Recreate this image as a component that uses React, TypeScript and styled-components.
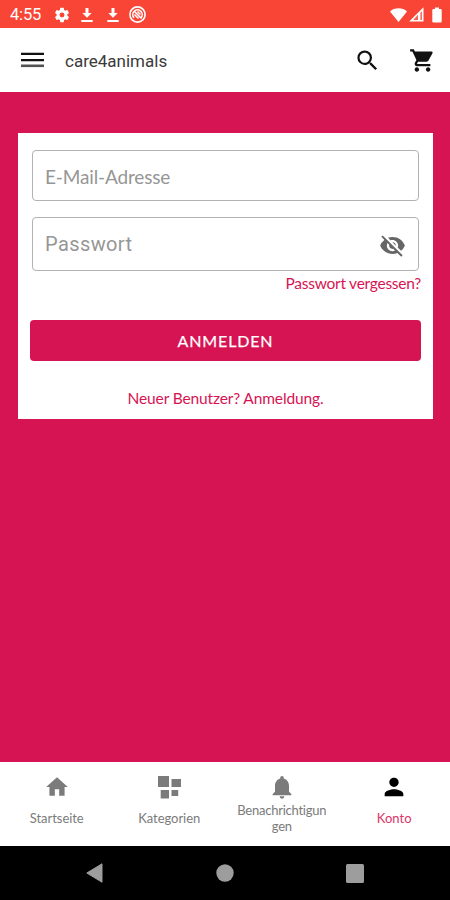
import React from 'react';
import styled, { createGlobalStyle } from 'styled-components';

const CRIMSON = '#d61453';
const GREY = '#7b7b7b';

const GlobalStyle = createGlobalStyle`
  * { box-sizing: border-box; }
  body { margin: 0; font-family: Lato, "Open Sans", sans-serif; font-variant-ligatures: none; }
`;

const Screen = styled.div`
  display: flex;
  flex-direction: column;
  width: 450px;
  height: 900px;
  overflow: hidden;
  background: ${CRIMSON};
`;

const StatusBar = styled.header`
  display: flex;
  align-items: center;
  justify-content: space-between;
  height: 28px;
  padding: 1px 8px 0 10px;
  background: #f84535;
  color: #fff;
`;

const StatusGroup = styled.div`
  display: flex;
  align-items: center;
`;

const Clock = styled.span`
  width: 43px;
  padding-top: 1px;
  font: 400 16.5px/20px Roboto, sans-serif;
  letter-spacing: -0.15px;
`;

const Icon = styled.svg<{ $w: number; $h?: number; $ml?: number }>`
  display: block;
  flex: none;
  width: ${(p) => p.$w}px;
  height: ${(p) => p.$h ?? p.$w}px;
  margin-left: ${(p) => p.$ml ?? 0}px;
  fill: currentColor;
`;

const AppBar = styled.div`
  display: flex;
  align-items: center;
  height: 64px;
  padding: 0 14px 0 21px;
  background: #fff;
  color: #111;
`;

const IconButton = styled.button<{ $ml?: number }>`
  display: flex;
  flex: none;
  margin: 0 0 0 ${(p) => p.$ml ?? 0}px;
  padding: 0;
  border: 0;
  background: none;
  color: inherit;
`;

const Title = styled.h1`
  flex: 1;
  margin: 2px 0 0 21px;
  font: 400 17px/22px Roboto, sans-serif;
  letter-spacing: 0;
  color: #3a3a3a;
`;

const Main = styled.main`
  flex: 1;
  padding: 41px 17px 0 18px;
`;

const Card = styled.form`
  display: flex;
  flex-direction: column;
  height: 286px;
  padding: 17px 12px 0;
  background: #fff;
`;

const Field = styled.label<{ $h: number; $gap?: number }>`
  display: flex;
  align-items: center;
  justify-content: space-between;
  height: ${(p) => p.$h}px;
  margin: 0 2px ${(p) => p.$gap ?? 0}px 2px;
  padding: 0 12px;
  border: 1.5px solid #b2b2b2;
  border-radius: 4px;
`;

const Placeholder = styled.span<{ $roboto?: boolean }>`
  padding-top: ${(p) => (p.$roboto ? 0 : 2)}px;
  font-family: ${(p) => (p.$roboto ? 'Roboto' : 'Lato')}, sans-serif;
  font-size: ${(p) => (p.$roboto ? 20 : 19)}px;
  line-height: 26px;
  letter-spacing: ${(p) => (p.$roboto ? 0.4 : -0.15)}px;
  color: #969696;
`;

const EyeSlot = styled.span`
  display: flex;
  margin-top: 3px;
  color: #666;
`;

const Link = styled.a<{ $align: 'flex-end' | 'center'; $top: number; $spacing: number }>`
  align-self: ${(p) => p.$align};
  margin-top: ${(p) => p.$top}px;
  font-size: 15.5px;
  line-height: 20px;
  letter-spacing: ${(p) => p.$spacing}px;
  white-space: nowrap;
  color: ${CRIMSON};
`;

const SubmitButton = styled.button`
  height: 41px;
  margin-top: 27px;
  padding: 0;
  border: 0;
  border-radius: 4px;
  background: ${CRIMSON};
  color: #fff;
  font: 400 16px/20px Lato, sans-serif;
  letter-spacing: 0.85px;
  -webkit-text-stroke: 0.25px #fff;
`;

const TabBar = styled.nav`
  display: grid;
  grid-template-columns: repeat(4, 1fr);
  height: 84px;
  background: #fff;
`;

const Tab = styled.div<{ $active?: boolean }>`
  display: flex;
  flex-direction: column;
  align-items: center;
  padding: 11px 0 0 1px;
  color: ${(p) => (p.$active ? '#000' : GREY)};
`;

const TabLabel = styled.span<{ $active?: boolean; $lines?: number; $spacing?: number }>`
  margin-top: ${(p) => (p.$lines === 2 ? 1 : 9)}px;
  font-size: 13px;
  line-height: 16px;
  letter-spacing: ${(p) => p.$spacing ?? 0}px;
  text-align: center;
  white-space: nowrap;
  color: ${(p) => (p.$active ? '#dc3567' : GREY)};
`;

const SystemBar = styled.footer`
  display: flex;
  align-items: center;
  justify-content: space-between;
  height: 54px;
  padding: 0 86px;
  background: #000;
  color: #9d9d9d;
`;

const DownloadIcon = ({ ml }: { ml: number }) => (
  <Icon viewBox="0 0 12 16" $w={12} $h={16} $ml={ml}>
    <path d="M4.5 1h3v5h3.2L6 10.7 1.3 6h3.2zM.3 13h11.4v2H.3z" />
  </Icon>
);

export default function App() {
  return (
    <Screen>
      <GlobalStyle />
      <StatusBar>
        <StatusGroup>
          <Clock>4:55</Clock>
          <Icon viewBox="0 0 24 24" $w={18}>
            <path d="M19.14 12.94c.04-.3.06-.61.06-.94 0-.32-.02-.64-.07-.94l2.03-1.58a.49.49 0 0 0 .12-.61l-1.92-3.32a.49.49 0 0 0-.59-.22l-2.39.96c-.5-.38-1.03-.7-1.62-.94l-.36-2.54A.48.48 0 0 0 13.92 2.4h-3.84a.47.47 0 0 0-.47.41l-.36 2.54c-.59.24-1.13.57-1.62.94l-2.39-.96a.48.48 0 0 0-.59.22L2.74 8.87a.47.47 0 0 0 .12.61l2.03 1.58c-.05.3-.09.63-.09.94s.02.64.07.94l-2.03 1.58a.49.49 0 0 0-.12.61l1.92 3.32c.12.22.37.29.59.22l2.39-.96c.5.38 1.03.7 1.62.94l.36 2.54c.05.24.24.41.48.41h3.84c.24 0 .44-.17.47-.41l.36-2.54c.59-.24 1.13-.56 1.62-.94l2.39.96c.22.08.47 0 .59-.22l1.92-3.32a.47.47 0 0 0-.12-.61zM12 15.3a3.3 3.3 0 1 1 0-6.6 3.3 3.3 0 0 1 0 6.6z" />
          </Icon>
          <DownloadIcon ml={10} />
          <DownloadIcon ml={13.5} />
          <Icon viewBox="0 0 17 17" $w={17} $ml={10.5}>
            <g fill="none" stroke="currentColor">
              <circle cx="8.5" cy="8.5" r="7.6" strokeWidth="1.6" />
              <path d="M5.1 11.8A4.7 4.7 0 1 1 11.9 11.8" strokeWidth="1.6" />
              <path d="M5 5l7.500 7.500M5.500 8.500l4 4M8.500 5.500l3 3" strokeWidth="1.5" />
            </g>
          </Icon>
        </StatusGroup>
        <StatusGroup>
          <Icon viewBox="0 0 17 14" $w={17} $h={14}>
            <path d="M8.5 14L0 3.4C2.3 1.2 5.2.2 8.5.2s6.2 1 8.5 3.2z" />
          </Icon>
          <Icon viewBox="0 0 15 15" $w={15} $h={15} $ml={2}>
            <path d="M14.5.2v14.3H.2z" />
            <path d="M9 7.800v5.100H4.200zM12.900 4.200v8.700h-1.500V5.700z" fill="#f84535" opacity=".85" />
          </Icon>
          <Icon viewBox="0 0 10 16" $w={10} $h={16} $ml={8}>
            <path d="M3 .5h4V2h1.500Q9.700 2 9.700 3.200v11q0 1.300-1.200 1.300h-7Q.3 15.500.3 14.200v-11Q.3 2 1.500 2H3z" />
          </Icon>
        </StatusGroup>
      </StatusBar>

      <AppBar>
        <IconButton type="button" aria-label="Menü">
          <Icon viewBox="0 0 23 16" $w={23} $h={16}>
            <path d="M0 .7h23v2.3H0zM0 6.9h23v2.3H0z" />
            <path d="M0 12.5h23v2.6H0z" opacity=".72" />
          </Icon>
        </IconButton>
        <Title>care4animals</Title>
        <IconButton type="button" aria-label="Suche">
          <Icon viewBox="0 0 24 24" $w={27}>
            <path d="M15.5 14h-.79l-.28-.27A6.47 6.47 0 0 0 16 9.5 6.5 6.5 0 1 0 9.5 16c1.61 0 3.09-.59 4.23-1.57l.27.28v.79l5 4.99L20.49 19zm-6 0C7.01 14 5 11.99 5 9.5S7.01 5 9.5 5 14 7.01 14 9.5 11.99 14 9.5 14z" />
          </Icon>
        </IconButton>
        <IconButton type="button" aria-label="Warenkorb" $ml={28}>
          <Icon viewBox="0 0 24 24" $w={27}>
            <path d="M7 18c-1.1 0-1.99.9-1.99 2S5.9 22 7 22s2-.9 2-2-.9-2-2-2zM1 2v2h2l3.6 7.59-1.35 2.45c-.16.28-.25.61-.25.96 0 1.1.9 2 2 2h12v-2H7.42c-.14 0-.25-.11-.25-.25l.03-.12.9-1.63h7.45c.75 0 1.41-.41 1.75-1.03l3.58-6.49A1 1 0 0 0 20.01 4H5.21l-.94-2zm16 16c-1.1 0-1.99.9-1.99 2s.89 2 1.99 2 2-.9 2-2-.9-2-2-2z" />
          </Icon>
        </IconButton>
      </AppBar>

      <Main>
        <Card>
          <Field $h={51} $gap={16}>
            <Placeholder>E-Mail-Adresse</Placeholder>
          </Field>
          <Field $h={54}>
            <Placeholder $roboto>Passwort</Placeholder>
            <EyeSlot>
              <Icon viewBox="0 0 24 24" $w={27}>
                <path d="M12 7c2.76 0 5 2.24 5 5 0 .65-.13 1.26-.36 1.83l2.92 2.92c1.51-1.26 2.7-2.89 3.43-4.75-1.73-4.39-6-7.5-11-7.5-1.4 0-2.74.25-3.98.7l2.16 2.16C10.74 7.13 11.35 7 12 7zM2 4.27l2.28 2.28.46.46A11.8 11.8 0 0 0 1 12c1.73 4.39 6 7.5 11 7.5 1.55 0 3.03-.3 4.38-.84l.42.42L19.73 22 21 20.73 3.27 3zM7.53 9.8l1.55 1.55c-.05.21-.08.43-.08.65 0 1.66 1.34 3 3 3 .22 0 .44-.03.65-.08l1.55 1.55c-.67.33-1.41.53-2.2.53-2.76 0-5-2.24-5-5 0-.79.2-1.53.53-2.2zm4.31-.78l3.15 3.15.02-.16c0-1.66-1.34-3-3-3z" />
              </Icon>
            </EyeSlot>
          </Field>
          <Link $align="flex-end" $top={2} $spacing={-0.25}>Passwort vergessen?</Link>
          <SubmitButton type="button">ANMELDEN</SubmitButton>
          <Link $align="center" $top={27} $spacing={-0.13}>Neuer Benutzer? Anmeldung.</Link>
        </Card>
      </Main>

      <TabBar>
        <Tab>
          <Icon viewBox="0 0 24 24" $w={26} $h={28}>
            <path d="M10 20v-6h4v6h5v-8h3L12 3 2 12h3v8z" />
          </Icon>
          <TabLabel $spacing={-0.05}>Startseite</TabLabel>
        </Tab>
        <Tab>
          <Icon viewBox="0 0 26 28" $w={26} $h={28}>
            <path d="M2 3h11v11H2zM15.5 6H25v8h-9.5zM4.7 17h8.3v8.5H4.7zM15.5 17h6.7v6h-6.700z" />
          </Icon>
          <TabLabel $spacing={-0.05}>Kategorien</TabLabel>
        </Tab>
        <Tab>
          <Icon viewBox="0 0 24 24" $w={28}>
            <path d="M12 22c1.1 0 2-.9 2-2h-4a2 2 0 0 0 2 2zm6-6v-5c0-3.07-1.64-5.64-4.5-6.32V4c0-.83-.67-1.5-1.5-1.5s-1.5.67-1.5 1.5v.68C7.63 5.36 6 7.92 6 11v5l-2 2v1h16v-1z" />
          </Icon>
          <TabLabel $lines={2} $spacing={-0.25}>
            Benachrichtigun
            <br />
            gen
          </TabLabel>
        </Tab>
        <Tab $active>
          <Icon viewBox="0 0 24 24" $w={28}>
            <path d="M12 12c2.21 0 4-1.79 4-4s-1.79-4-4-4-4 1.79-4 4 1.79 4 4 4zm0 2c-2.67 0-8 1.34-8 4v2h16v-2c0-2.66-5.33-4-8-4z" />
          </Icon>
          <TabLabel $active $spacing={0.1}>Konto</TabLabel>
        </Tab>
      </TabBar>

      <SystemBar>
        <Icon viewBox="0 0 17 20" $w={17} $h={20}>
          <path d="M16 .8v18.4L.8 10z" stroke="currentColor" strokeLinejoin="round" />
        </Icon>
        <Icon viewBox="0 0 18 18" $w={18}>
          <circle cx="9" cy="9" r="8.7" />
        </Icon>
        <Icon viewBox="0 0 18 19" $w={18} $h={19}>
          <rect width="18" height="19" rx="1.5" />
        </Icon>
      </SystemBar>
    </Screen>
  );
}
